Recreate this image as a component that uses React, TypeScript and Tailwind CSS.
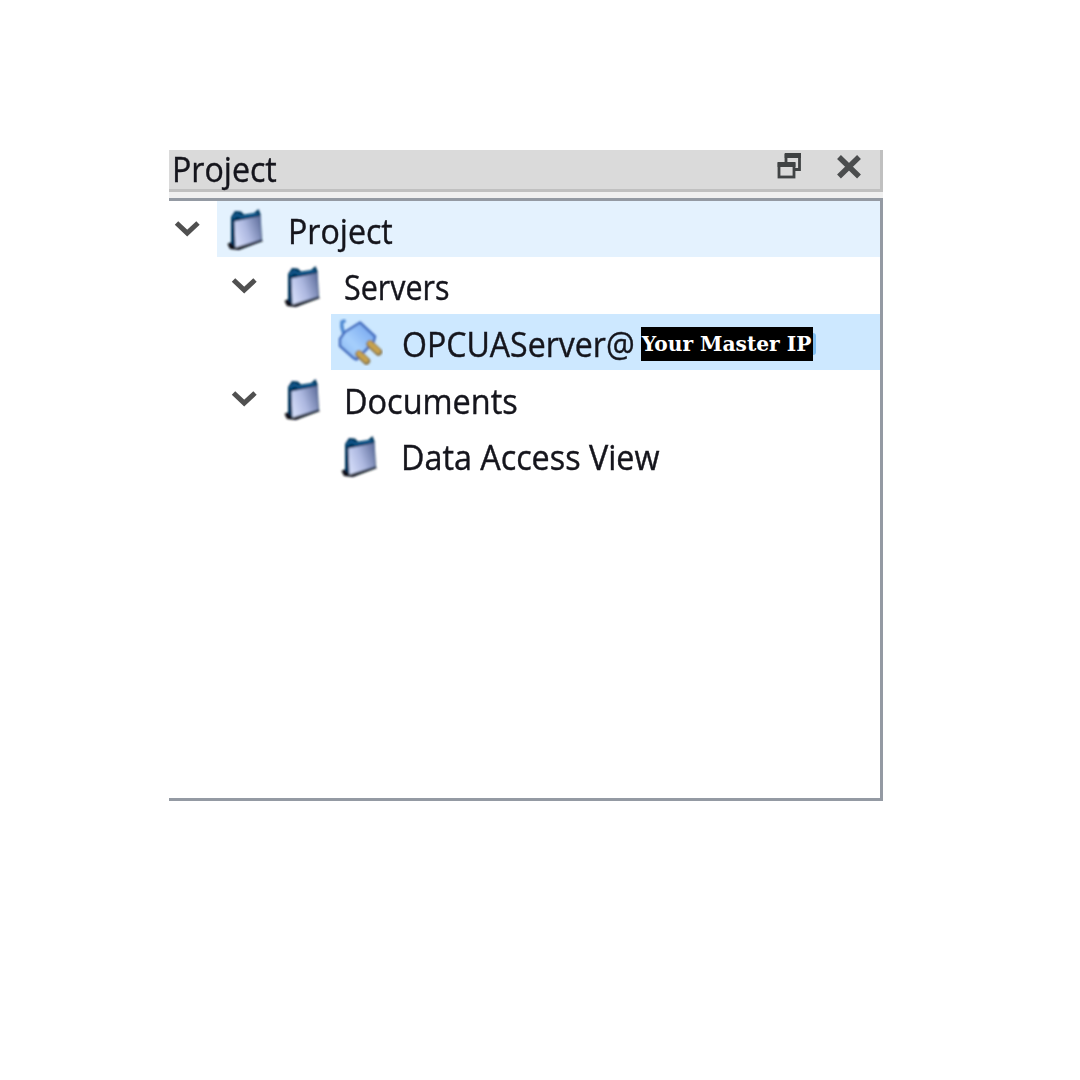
import React from "react";

function Chevron() {
  return (
    <svg width="28" height="20" viewBox="0 0 28 20" className="block">
      <path d="M3.5 4 L14.2 14 L25 4" fill="none" stroke="#505050" strokeWidth="5" />
    </svg>
  );
}

function Folder() {
  return (
    <svg width="42" height="46" viewBox="0 0 42 46" className="block">
      <defs>
        <linearGradient id="front" x1="0" y1="0.75" x2="1" y2="0.3">
          <stop offset="0" stopColor="#d6defa" />
          <stop offset="0.5" stopColor="#acb7df" />
          <stop offset="1" stopColor="#6877a4" />
        </linearGradient>
        <filter id="soft" x="-10%" y="-10%" width="120%" height="120%">
          <feGaussianBlur stdDeviation="0.85" />
        </filter>
      </defs>
      <g filter="url(#soft)">
        <path d="M2.5 38 L8 35 L35 33 L38 35 L14 44 L5 43 Z" fill="#0b0e13" />
        <path d="M6 11 L10 5 L16 5.5 L19 8.5 L29 7 L33.5 3 L35.5 8 L37 34 L10 41 L6 37 Z" fill="#06345c" />
        <path d="M8 12 L12 8.5 L17 11 L33 8" fill="none" stroke="#0f5d94" strokeWidth="2" />
        <path d="M9.5 15.5 L35.5 10 L36 33.5 L10.5 41.5 Z" fill="url(#front)" />
        <path d="M37 34.5 L12 42.5" stroke="#1c2333" strokeWidth="1.8" />
      </g>
    </svg>
  );
}

function Plug() {
  return (
    <svg width="48" height="48" viewBox="0 0 48 48" className="block">
      <defs>
        <linearGradient id="plug" x1="0" y1="1" x2="1" y2="0">
          <stop offset="0" stopColor="#83b2ef" />
          <stop offset="0.4" stopColor="#a6cffc" />
          <stop offset="1" stopColor="#6b9deb" />
        </linearGradient>
        <filter id="plug-soft"><feGaussianBlur stdDeviation="0.85" /></filter>
      </defs>
      <g filter="url(#plug-soft)">
        <path d="M8.5 2.5 L5 4 Q4 11 8 17" fill="none" stroke="#4f89d2" strokeWidth="3.5" />
        <path d="M23 4.5 L38 18.5 L36.5 24 L19.5 41.5 L16.5 40 L3 28 L3 21 L8 14 Z" fill="url(#plug)" stroke="#466fc0" strokeWidth="2.6" strokeLinejoin="round" />
        <path d="M22 36 L29.5 43 M33 26 L41.5 34" stroke="#85754e" strokeWidth="7.4" strokeLinecap="round" />
        <path d="M22 35.5 L29 42 M33 25.5 L41 33" stroke="#c8a24e" strokeWidth="5" strokeLinecap="round" />
      </g>
    </svg>
  );
}

function Label({ children, scale }: { children: React.ReactNode; scale: string }) {
  return (
    <span className={`block origin-left whitespace-nowrap font-['Open_Sans','Noto_Sans',sans-serif] text-[34px] leading-[40px] text-[#15151c] [-webkit-text-stroke:0.4px_#15151c] ${scale}`}>
      {children}
    </span>
  );
}

export default function App() {
  return (
    <main className="h-[1080px] w-[1080px] overflow-hidden bg-white pl-[169px] pt-[150px]">
      <section className="flex h-[651px] w-[714px] flex-col bg-[#f0f0f0]">
        <header className="flex h-[42px] shrink-0 items-start justify-between border-b-[3px] border-r-[3px] border-[#c0c0c0] bg-[#dadada] pl-[3px]">
          <div className="-mt-px"><Label scale="scale-x-[0.945]">Project</Label></div>
          <div className="flex gap-[31px] pr-[17px] pt-[2px]">
            <svg width="28" height="28" viewBox="0 0 28 28" fill="none" stroke="#404344">
              <path d="M10 10 V3.5 H23.5 V17.5 H18" strokeWidth="2.8" />
              <path d="M8.7 3.5 H25" strokeWidth="5" />
              <rect x="3" y="12" width="15" height="13" fill="#dadada" strokeWidth="2.8" />
              <path d="M1.6 12.5 H19.4" strokeWidth="5" />
            </svg>
            <svg width="28" height="28" viewBox="0 0 28 28">
              <path d="M4 5 L24 24.5 M24 5 L4 24.5" stroke="#4b4d4e" strokeWidth="5.5" />
            </svg>
          </div>
        </header>
        <div className="mt-[6px] flex-1 border-b-[3px] border-r-[3px] border-t-[3px] border-[#949aa3] bg-white">
          <div className="flex h-[56px] items-center">
            <div className="flex w-[48px] shrink-0 justify-start pl-[4px]"><Chevron /></div>
            <div className="flex h-full flex-1 items-center bg-[#e4f2fe] pl-[8px]">
              <Folder />
              <div className="pl-[21px] pt-[3px]"><Label scale="scale-x-[0.945]">Project</Label></div>
            </div>
          </div>
          <div className="flex h-[57px] items-center pl-[61px]">
            <Chevron />
            <div className="pl-[24px]"><Folder /></div>
            <div className="pl-[20px] pt-[3px]"><Label scale="scale-x-[0.895]">Servers</Label></div>
          </div>
          <div className="ml-[162px] flex h-[56px] items-center bg-[#cde8ff] pl-[6px]">
            <Plug />
            <div className="w-[238px] shrink-0 pl-[17px] pt-[4px]"><Label scale="scale-x-[0.943]">OPCUAServer@</Label></div>
            <div className="ml-[18px] mt-[3px] flex h-[34px] w-[172px] shrink-0 items-center justify-center whitespace-nowrap bg-black pr-px pt-[2px] font-['DejaVu_Serif',serif] text-[20.2px] font-bold text-white">Your Master IP</div>
            <div className="mt-[3px] h-[22px] w-[3px] rounded-r-full bg-[#7fbdf0]" />
          </div>
          <div className="flex h-[57px] items-center pl-[61px]">
            <Chevron />
            <div className="pl-[24px]"><Folder /></div>
            <div className="pl-[20px] pt-[4px]"><Label scale="scale-x-[0.955]">Documents</Label></div>
          </div>
          <div className="flex h-[57px] items-center pl-[170px]">
            <Folder />
            <div className="pl-[20px] pt-[3px]"><Label scale="scale-x-[0.95]">Data Access View</Label></div>
          </div>
        </div>
      </section>
    </main>
  );
}
